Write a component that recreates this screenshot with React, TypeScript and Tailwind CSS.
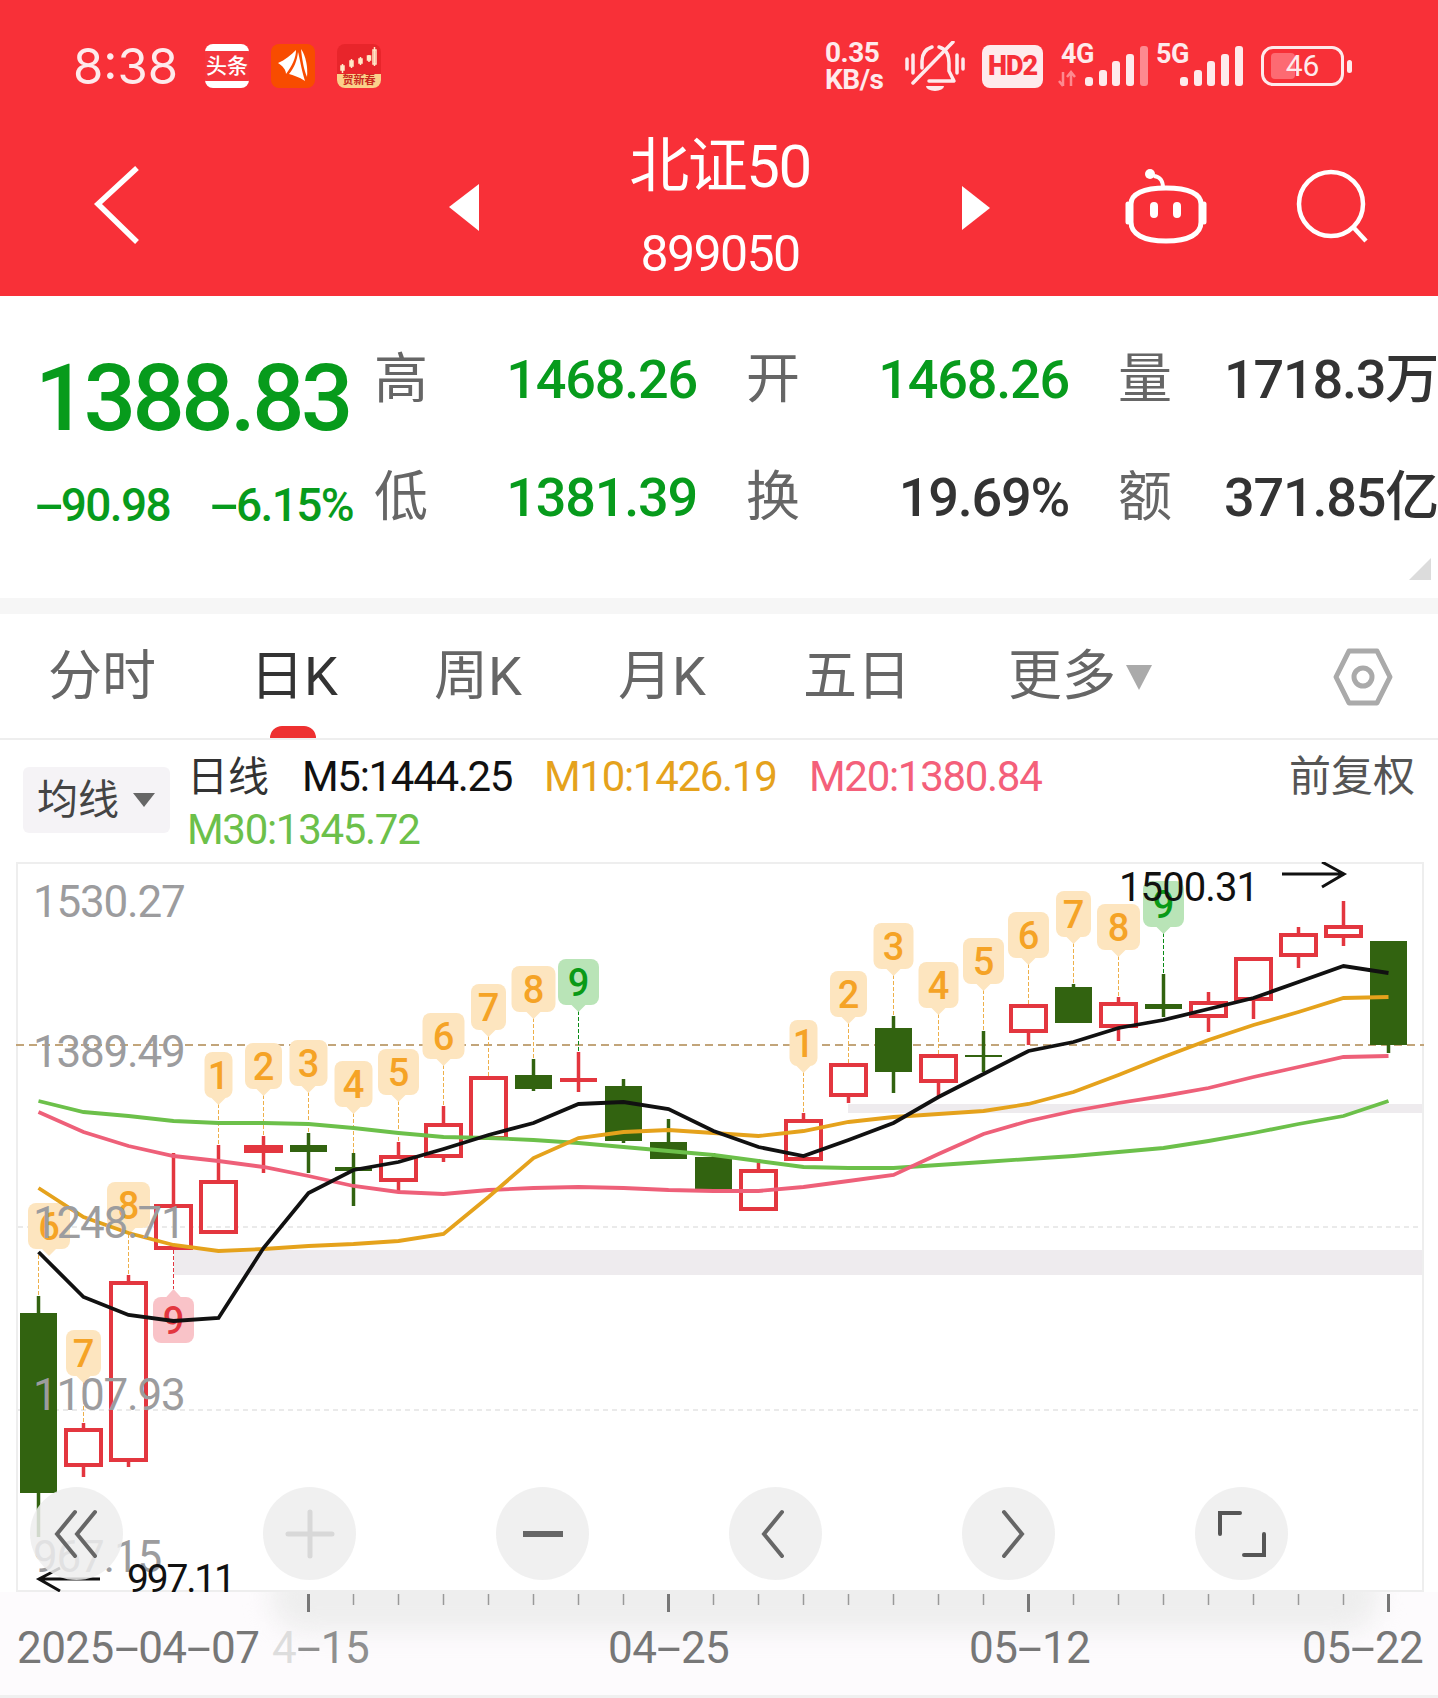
import React from 'react';

const RED = '#e3363f';
const GREEN = '#326310';

// [high, top, bottom, low, up?] in page pixels, one per trading day, x = 38.5 + 45 * i
const candles: [number, number, number, number, boolean][] = [
  [1296, 1313, 1493, 1537, false],
  [1423, 1428, 1467, 1477, true],
  [1275, 1281, 1462, 1467, true],
  [1153, 1204, 1250, 1250, true],
  [1145, 1180, 1234, 1234, true],
  [1136, 1145, 1153, 1173, true],
  [1133, 1145, 1152, 1173, false],
  [1153, 1167, 1171, 1206, false],
  [1142, 1155, 1182, 1192, true],
  [1106, 1123, 1158, 1162, true],
  [1076, 1076, 1140, 1140, true],
  [1059, 1075, 1089, 1091, false],
  [1052, 1078, 1082, 1092, true],
  [1079, 1086, 1141, 1143, false],
  [1119, 1142, 1159, 1159, false],
  [1153, 1157, 1189, 1189, false],
  [1159, 1169, 1211, 1211, true],
  [1113, 1119, 1161, 1161, true],
  [1063, 1063, 1097, 1103, true],
  [1016, 1028, 1072, 1093, false],
  [1054, 1054, 1083, 1097, true],
  [1031, 1055, 1057, 1072, false],
  [1004, 1004, 1033, 1045, true],
  [984, 987, 1023, 1023, false],
  [997, 1002, 1028, 1041, true],
  [974, 1004, 1009, 1017, false],
  [992, 1001, 1018, 1032, true],
  [957, 957, 1001, 1019, true],
  [927, 933, 957, 968, true],
  [901, 925, 938, 946, true],
  [941, 941, 1045, 1053, false],
];

const m5 = [1252, 1297, 1315, 1321, 1318, 1248, 1193, 1170, 1162, 1149, 1135, 1123, 1104, 1102, 1109, 1131, 1147, 1156, 1140, 1123, 1097, 1074, 1051, 1042, 1028, 1020, 1009, 998, 982, 966, 973];
const m10 = [1188, 1217, 1233, 1245, 1251, 1249, 1246, 1244, 1241, 1234, 1197, 1158, 1138, 1132, 1130, 1133, 1136, 1131, 1122, 1117, 1114, 1111, 1104, 1092, 1075, 1057, 1040, 1025, 1012, 998, 997];
const m20 = [1112, 1132, 1146, 1156, 1161, 1167, 1176, 1186, 1192, 1194, 1190, 1188, 1187, 1188, 1190, 1191, 1191, 1187, 1181, 1175, 1154, 1134, 1121, 1111, 1103, 1096, 1088, 1077, 1067, 1057, 1056];
const m30 = [1101, 1112, 1116, 1121, 1123, 1123, 1124, 1128, 1133, 1137, 1138, 1140, 1143, 1147, 1151, 1155, 1161, 1167, 1168, 1168, 1165, 1162, 1159, 1156, 1152, 1148, 1141, 1133, 1124, 1116, 1101];

const cx = (i: number) => 38.5 + 45 * i;
const pts = (a: number[]) => a.map((y, i) => `${cx(i)},${y}`).join(' ');

// TD sequence bubbles: candle index, digit, width, top of the box, wick it points at
const marks: { i: number; n: number; w: number; top: number; to: number; dx?: number; kind?: 'buy' | 'sell' }[] = [
  { i: 0, n: 6, w: 42, top: 1203, to: 1296, dx: 10.5 },
  { i: 1, n: 7, w: 35, top: 1330, to: 1423 },
  { i: 2, n: 8, w: 43, top: 1182, to: 1275 },
  { i: 4, n: 1, w: 28, top: 1052, to: 1145 },
  { i: 5, n: 2, w: 37, top: 1043, to: 1136 },
  { i: 6, n: 3, w: 38, top: 1040, to: 1133 },
  { i: 7, n: 4, w: 38, top: 1061, to: 1153 },
  { i: 8, n: 5, w: 41, top: 1049, to: 1142 },
  { i: 9, n: 6, w: 42, top: 1013, to: 1106 },
  { i: 10, n: 7, w: 35, top: 984, to: 1076 },
  { i: 11, n: 8, w: 44, top: 966, to: 1059 },
  { i: 12, n: 9, w: 41, top: 959, to: 1052, kind: 'buy' },
  { i: 17, n: 1, w: 28, top: 1020, to: 1113 },
  { i: 18, n: 2, w: 37, top: 971, to: 1063 },
  { i: 19, n: 3, w: 40, top: 923, to: 1016 },
  { i: 20, n: 4, w: 40, top: 962, to: 1054 },
  { i: 21, n: 5, w: 41, top: 938, to: 1031 },
  { i: 22, n: 6, w: 41, top: 912, to: 1004 },
  { i: 23, n: 7, w: 35, top: 891, to: 984 },
  { i: 24, n: 8, w: 43, top: 904, to: 997 },
  { i: 25, n: 9, w: 41, top: 881, to: 974, kind: 'buy' },
];

const axisLabels: [string, number][] = [
  ['1530.27', 917],
  ['1389.49', 1067],
  ['1248.71', 1238],
  ['1107.93', 1410],
  ['967.15', 1572],
];

const Chart: React.FC = () => (
  <svg viewBox="16 862 1408 730" className="absolute inset-0 block h-full w-full">
    <rect x="17" y="863" width="1406" height="728" fill="#fff" stroke="#eeeeee" strokeWidth="2" />
    <rect x="174" y="1250" width="1248" height="25" fill="#eeebee" />
    <rect x="848" y="1104" width="574" height="9" fill="#eeebee" />
    <line x1="18" x2="1422" y1="1227" y2="1227" stroke="#e4e4e4" strokeWidth="1.5" strokeDasharray="5 4" />
    <line x1="18" x2="1422" y1="1410" y2="1410" stroke="#e4e4e4" strokeWidth="1.5" strokeDasharray="5 4" />
    <line x1="16" x2="1424" y1="1045" y2="1045" stroke="#c2a57a" strokeWidth="2" strokeDasharray="8 5" />

    {marks.map(m => {
      const bg = m.kind === 'buy' ? '#b9e4b7' : '#fde5bf';
      const fg = m.kind === 'buy' ? '#0a9a16' : '#f5a326';
      const line = m.kind === 'buy' ? '#0a8a16' : '#eeb04a';
      const x = cx(m.i);
      const bx = x + (m.dx ?? 0);
      return (
        <g key={m.i}>
          <line x1={x} x2={x} y1={m.top + 52} y2={m.to} stroke={line} strokeWidth="1" strokeDasharray="4 2" />
          <rect x={bx - m.w / 2} y={m.top} width={m.w} height={46} rx="8" fill={bg} />
          <polygon points={`${bx - 9},${m.top + 44} ${bx + 9},${m.top + 44} ${bx},${m.top + 53}`} fill={bg} />
          <text x={bx} y={m.top + 37} textAnchor="middle" fontSize="38" fontWeight="500" fill={fg}>{m.n}</text>
        </g>
      );
    })}
    {/* the sell 9 hangs under its candle, so it points up */}
    <line x1={173.5} x2={173.5} y1={1250} y2={1289} stroke={RED} strokeWidth="1" strokeDasharray="4 2" />
    <rect x="153" y="1297" width="41" height="46" rx="8" fill="#f9c3c8" />
    <polygon points="164.5,1299 182.5,1299 173.5,1289" fill="#f9c3c8" />
    <text x="173.5" y="1334" textAnchor="middle" fontSize="38" fontWeight="500" fill={RED}>9</text>

    {candles.map(([high, top, bottom, low, up], i) => {
      const x = cx(i);
      const color = up ? RED : GREEN;
      const flat = bottom - top < 7;
      return (
        <g key={i}>
          <line x1={x} x2={x} y1={high} y2={top} stroke={color} strokeWidth="3.5" />
          <line x1={x} x2={x} y1={bottom} y2={low} stroke={color} strokeWidth="3.5" />
          {up && !flat ? (
            <rect x={x - 17.5} y={top + 2} width={35} height={bottom - top - 4} fill="none" stroke={color} strokeWidth="4" />
          ) : (
            <rect x={x - 18.5} y={top} width={37} height={bottom - top} fill={color} />
          )}
        </g>
      );
    })}

    <polyline points={pts(m30)} fill="none" stroke="#6cc04a" strokeWidth="3.8" />
    <polyline points={pts(m20)} fill="none" stroke="#ee6079" strokeWidth="3.8" />
    <polyline points={pts(m10)} fill="none" stroke="#e5a21c" strokeWidth="3.8" />
    <polyline points={pts(m5)} fill="none" stroke="#111" strokeWidth="3.8" />

    {axisLabels.map(([t, y]) => (
      <text key={t} x="33" y={y} fontSize="44" letterSpacing="-1.2" fill="#9c9c9e">{t}</text>
    ))}

    <text x="1119" y="901" fontSize="40" letterSpacing="-0.9" fill="#111">1500.31</text>
    <path d="M1282 874H1343M1322 862L1344 874L1322 887" fill="none" stroke="#111" strokeWidth="3" />
    <text x="127" y="1592" fontSize="39" letterSpacing="-2.2" fill="#111">997.11</text>
    <path d="M100 1579H40M60 1568L39 1579L60 1591" fill="none" stroke="#111" strokeWidth="3" />
  </svg>
);

const RoundBtn: React.FC<{ children: React.ReactNode }> = ({ children }) => (
  <div className="flex h-[93px] w-[93px] items-center justify-center rounded-full bg-[#ededed]/85">
    <svg width="56" height="56" viewBox="0 0 56 56" fill="none" strokeLinecap="round">{children}</svg>
  </div>
);

// the app draws its dashes long, the hyphen is stretched to match
const Dash: React.FC = () => <span className="inline-block w-[0.56em] scale-x-[2] text-center">-</span>;

const Signal: React.FC<{ label: string; faded?: boolean; arrows?: boolean }> = ({ label, faded, arrows }) => (
  <svg width="90" height="45" viewBox="0 0 90 45" fill="#feeaec" className="overflow-visible">
    <text x="3" y="19" fontSize="27" fontWeight="700" letterSpacing="-0.5">{label}</text>
    {arrows && <path d="M5 28v14M1 37l4 5M13 42V28M9 33l4-5l4 5" stroke="#fd8a90" strokeWidth="2.5" fill="none" />}
    <rect x="27" y="33" width="8" height="9" rx="3" />
    <rect x="41" y="26" width="8" height="16" rx="3" />
    <rect x="54" y="17" width="8" height="25" rx="3" />
    <rect x="68" y="10" width="8" height="32" rx="3" />
    <rect x="82" y="2" width="8" height="40" rx="3" fill={faded ? '#fd8a90' : '#feeaec'} />
  </svg>
);

const StatusBar: React.FC = () => (
  <div className="flex h-[130px] items-center justify-between pl-[73px] pr-[86px] pt-[2px] text-[#feeaec]">
    <div className="flex items-center">
      <span className="w-[132px] font-['Inter'] text-[49px] leading-none">8:38</span>
      <div className="relative h-[44px] w-[44px] overflow-hidden rounded-[8px] bg-white">
        <div className="absolute inset-x-0 top-[7px] flex h-[30px] items-center justify-center bg-[#f4353d] text-[21px] font-medium leading-none text-white">头条</div>
      </div>
      <div className="ml-[22px] h-[44px] w-[44px] rounded-[8px] bg-[#f84c00]">
        <svg viewBox="0 0 44 44" className="h-full w-full" fill="#fff">
          <path d="M7 19C14 16 20 11 25 6C25 14 21 22 15 30C15 26 12 22 7 19Z" />
          <path d="M27 8C29 15 30 24 34 37C28 33 22 31 18 30C23 24 26 17 27 8Z" />
          <path d="M30 5C35 12 37 24 36 33C33 26 31 16 30 5Z" />
        </svg>
      </div>
      <div className="ml-[22px] flex h-[44px] w-[44px] flex-col overflow-hidden rounded-[8px] bg-[#e8252b]">
        <svg viewBox="0 0 44 30" className="block h-[30px] w-[44px]" fill="none" stroke="#ffe9c8" strokeWidth="1.5">
          <path d="M5.5 20V29M14.5 15V24M23.5 13V21M32 11V18M37.5 3V22" />
          <rect x="4" y="22" width="3" height="4" fill="#ffe9c8" />
          <rect x="13" y="17" width="3" height="5" fill="#ffe9c8" />
          <rect x="22" y="15" width="3" height="4" fill="#ffe9c8" />
          <rect x="30.5" y="12" width="3" height="4" fill="#ffe9c8" />
          <rect x="36" y="6" width="3" height="14" />
        </svg>
        <div className="flex-1 bg-[#fbd08a] text-center text-[11px] font-bold leading-[14px] text-[#c8281e]">贺新春</div>
      </div>
    </div>
    <div className="flex items-center">
      <div className="w-[62px] text-[28px] font-bold leading-[27px] tracking-[-0.5px]">
        <div>0.35</div>
        <div>KB/s</div>
      </div>
      <svg width="60" height="50" viewBox="0 0 60 50" className="ml-[18px]" fill="none" stroke="#feeaec" strokeWidth="3.5" strokeLinecap="round" strokeLinejoin="round">
        <path d="M48 1L8 42" />
        <path d="M34 6C41 8 44 14 44 22V30L49 40H24" />
        <path d="M17 27V20C17 13 21 8 27 6" />
        <path d="M21 45H39A9 5 0 0 1 21 45Z" fill="#feeaec" stroke="none" />
        <path d="M2 18V28M8 14V32M52 14V32M58 18V28" />
      </svg>
      <div className="ml-[17px] flex h-[43px] w-[61px] items-center justify-center rounded-[8px] bg-[#feeaec] text-[27px] font-black tracking-[-1px] text-[#f62f38]">HD2</div>
      <div className="ml-[15px]"><Signal label="4G" faded arrows /></div>
      <div className="ml-[5px]"><Signal label="5G" /></div>
      <div className="relative ml-[18px] flex h-[40px] w-[83px] items-center justify-center rounded-[12px] border-[3px] border-[#feeaec] text-[30px] leading-none">
        <div className="absolute inset-y-[4px] left-[7px] w-[24px] rounded-[4px] bg-[#fd6a72]" />
        <span className="relative">46</span>
      </div>
      <div className="ml-[3px] h-[13px] w-[5px] rounded-full bg-[#feeaec]" />
    </div>
  </div>
);

const NavBar: React.FC = () => (
  <div className="flex h-[166px] items-start">
    <svg width="60" height="90" viewBox="0 0 60 90" fill="none" stroke="#fff" strokeWidth="5.5" className="ml-[86px] mt-[30px]">
      <polyline points="51,8 12,44 51,82" strokeLinejoin="miter" />
    </svg>
    <svg width="30" height="47" viewBox="0 0 30 47" fill="#fff" className="ml-[303px] mt-[54px]">
      <polygon points="0,23 30,0 30,47" />
    </svg>
    <div className="ml-[132px] mt-[4px] flex w-[218px] flex-col items-center text-white">
      <div className="text-[60px] leading-[66px] tracking-[-1.5px]">北证50</div>
      <div className="mt-[29px] text-[50px] leading-[50px] tracking-[-1.6px]">899050</div>
    </div>
    <svg width="28" height="44" viewBox="0 0 28 44" fill="#fff" className="ml-[133px] mt-[56px]">
      <polygon points="0,0 28,22 0,44" />
    </svg>
    <svg width="86" height="76" viewBox="0 0 86 76" fill="none" stroke="#fff" strokeWidth="5" className="ml-[133px] mt-[38px]">
      <circle cx="27" cy="6" r="5" fill="#fff" stroke="none" />
      <path d="M31 8C38 9 40 13 40 20" strokeWidth="4" />
      <path d="M8 36C8 26 20 20 43 20C66 20 78 26 78 36V54C78 66 66 73 43 73C20 73 8 66 8 54Z" />
      <path d="M5 36V54M81 36V54" strokeWidth="5" strokeLinecap="round" />
      <path d="M31 38V46M54 38V46" strokeWidth="8" strokeLinecap="round" />
    </svg>
    <svg width="74" height="76" viewBox="0 0 74 76" fill="none" stroke="#fff" strokeWidth="4.5" className="ml-[87px] mt-[38px]">
      <circle cx="35" cy="36" r="32" />
      <path d="M58 60L70 73" />
    </svg>
  </div>
);

const Quote: React.FC = () => {
  const cell = 'flex items-center justify-between';
  const label = 'text-[54px] leading-none text-[#666]';
  const green = 'text-[54px] font-medium leading-none tracking-[-1.2px] text-[#079b1c]';
  const dark = 'text-[54px] font-medium leading-none tracking-[-1.2px] text-[#333]';
  return (
    <div className="relative flex h-[302px] border-b-[16px] border-[#f6f6f6] box-content">
      <div className="w-[374px] pl-[35px] text-[#079b1c]">
        <div className="mt-[57px] text-[92px] font-medium leading-[92px] tracking-[-3.5px]">1388.83</div>
        <div className="mt-[37px] flex w-[318px] justify-between text-[46px] font-medium leading-none tracking-[-1.6px]">
          <span><Dash />90.98</span>
          <span><Dash />6.15%</span>
        </div>
      </div>
      <div className="grid h-[261px] flex-1 grid-cols-[323px_323px_320px] grid-rows-2 gap-x-[49px] pt-[25px]">
        <div className={cell}><span className={label}>高</span><span className={green}>1468.26</span></div>
        <div className={cell}><span className={label}>开</span><span className={green}>1468.26</span></div>
        <div className={cell}><span className={label}>量</span><span className={`${dark} whitespace-nowrap`}>1718.3万</span></div>
        <div className={cell}><span className={label}>低</span><span className={green}>1381.39</span></div>
        <div className={cell}><span className={label}>换</span><span className={dark}>19.69%</span></div>
        <div className={cell}><span className={label}>额</span><span className={`${dark} whitespace-nowrap`}>371.85亿</span></div>
      </div>
      {/* fold corner */}
      <div className="absolute bottom-[18px] right-[7px] h-0 w-0 border-b-[22px] border-l-[22px] border-b-[#dcdcdc] border-l-transparent" />
    </div>
  );
};

const Tabs: React.FC = () => (
  <div className="flex h-[126px] items-center border-b-2 border-[#eeeeee] pl-[48px] pt-[2px] text-[54px] leading-none text-[#666]">
    <div className="w-[202px]">分时</div>
    <div className="relative w-[184px] text-[#333]">
      日K
      <div className="absolute left-[20px] top-[76px] h-[12px] w-[46px] rounded-t-full bg-[#ee3030]" />
    </div>
    <div className="w-[184px]">周K</div>
    <div className="w-[185px]">月K</div>
    <div className="w-[205px]">五日</div>
    <div className="flex flex-1 items-center">
      更多
      <div className="ml-[10px] h-0 w-0 border-x-[13px] border-t-[25px] border-x-transparent border-t-[#aaa]" />
    </div>
    <svg width="60" height="60" viewBox="0 0 60 60" fill="none" stroke="#aaa" strokeWidth="5" strokeLinejoin="round" className="mr-[45px]">
      <polygon points="16,4 44,4 57,30 44,56 16,56 3,30" />
      <circle cx="30" cy="30" r="9" />
    </svg>
  </div>
);

const MaRow: React.FC = () => (
  <div className="flex h-[122px] text-[42px] leading-none tracking-[-1.3px]">
    <div className="ml-[23px] mt-[27px] flex h-[66px] w-[147px] items-center rounded-[6px] bg-[#f5f3f6] pl-[14px] tracking-normal text-[#444]">
      <span className="text-[41px]">均线</span>
      <div className="ml-[14px] h-0 w-0 border-x-[11px] border-t-[14px] border-x-transparent border-t-[#666]" />
    </div>
    <div className="ml-[17px] flex flex-1 flex-col pt-[16px]">
      <div className="flex items-center">
        <span className="w-[115px] text-[41px] tracking-normal text-[#333]">日线</span>
        <span className="w-[242px] text-[#111]">M5:1444.25</span>
        <span className="w-[265px] text-[#e5a21c]">M10:1426.19</span>
        <span className="text-[#f4607a]">M20:1380.84</span>
        <span className="ml-auto mr-[23px] text-[42px] tracking-normal text-[#555]">前复权</span>
      </div>
      <div className="mt-[11px] text-[#6cc04a]">M30:1345.72</div>
    </div>
  </div>
);

const ticks = Array.from({ length: 25 }, (_, i) => i);

const Axis: React.FC = () => (
  <div className="relative h-[106px] overflow-hidden border-b-[3px] border-[#f0f0f0] bg-[#fdfbfd]">
    <div className="absolute left-[270px] top-[-30px] h-[70px] w-[1110px] rounded-full bg-[#eeeeee] blur-md" />
    <svg width="1438" height="22" viewBox="0 0 1438 22" className="relative block">
      {ticks.map(i => {
        const x = 308.5 + 45 * i;
        const major = i % 8 === 0;
        return <line key={i} x1={x} x2={x} y1="2" y2={major ? 20 : 13} stroke={major ? '#777' : '#999'} strokeWidth={major ? 3 : 1.5} />;
      })}
    </svg>
    <div className="relative mt-[12px] flex pl-[17px] text-[44px] leading-none tracking-[-0.6px] text-[#777]">
      <span className="w-[255px]">2025<Dash />04<Dash />07</span>
      <span className="w-[336px] text-[#8f8f8f]"><span className="text-[#dddddd]">4</span><Dash />15</span>
      <span className="w-[361px]">04<Dash />25</span>
      <span className="w-[333px]">05<Dash />12</span>
      <span>05<Dash />22</span>
    </div>
  </div>
);

export default function App() {
  return (
    <div className="h-[1698px] w-[1438px] overflow-hidden bg-white font-[Roboto,'Noto_Sans_CJK_SC',sans-serif]">
      <div className="h-[296px] bg-[#f83038]">
        <StatusBar />
        <NavBar />
      </div>
      <Quote />
      <Tabs />
      <MaRow />
      <div className="relative ml-[16px] h-[730px] w-[1408px]">
        <Chart />
        <div className="absolute inset-x-0 top-[625px] flex gap-[140px] pl-[14px]">
          <RoundBtn>
            <path d="M26 6L8 28L26 50M46 6L28 28L46 50" stroke="#666" strokeWidth="4" />
          </RoundBtn>
          <RoundBtn>
            <path d="M6 28H50M28 6V50" stroke="#d8d8d8" strokeWidth="5" />
          </RoundBtn>
          <RoundBtn>
            <path d="M8 28H48" stroke="#666" strokeWidth="6" strokeLinecap="butt" />
          </RoundBtn>
          <RoundBtn>
            <path d="M34 6L16 28L34 50" stroke="#666" strokeWidth="4" />
          </RoundBtn>
          <RoundBtn>
            <path d="M23 6L41 28L23 50" stroke="#666" strokeWidth="4" />
          </RoundBtn>
          <RoundBtn>
            <path d="M26 7H6V28M30 49H50V28" stroke="#555" strokeWidth="4" />
          </RoundBtn>
        </div>
      </div>
      <Axis />
    </div>
  );
}
